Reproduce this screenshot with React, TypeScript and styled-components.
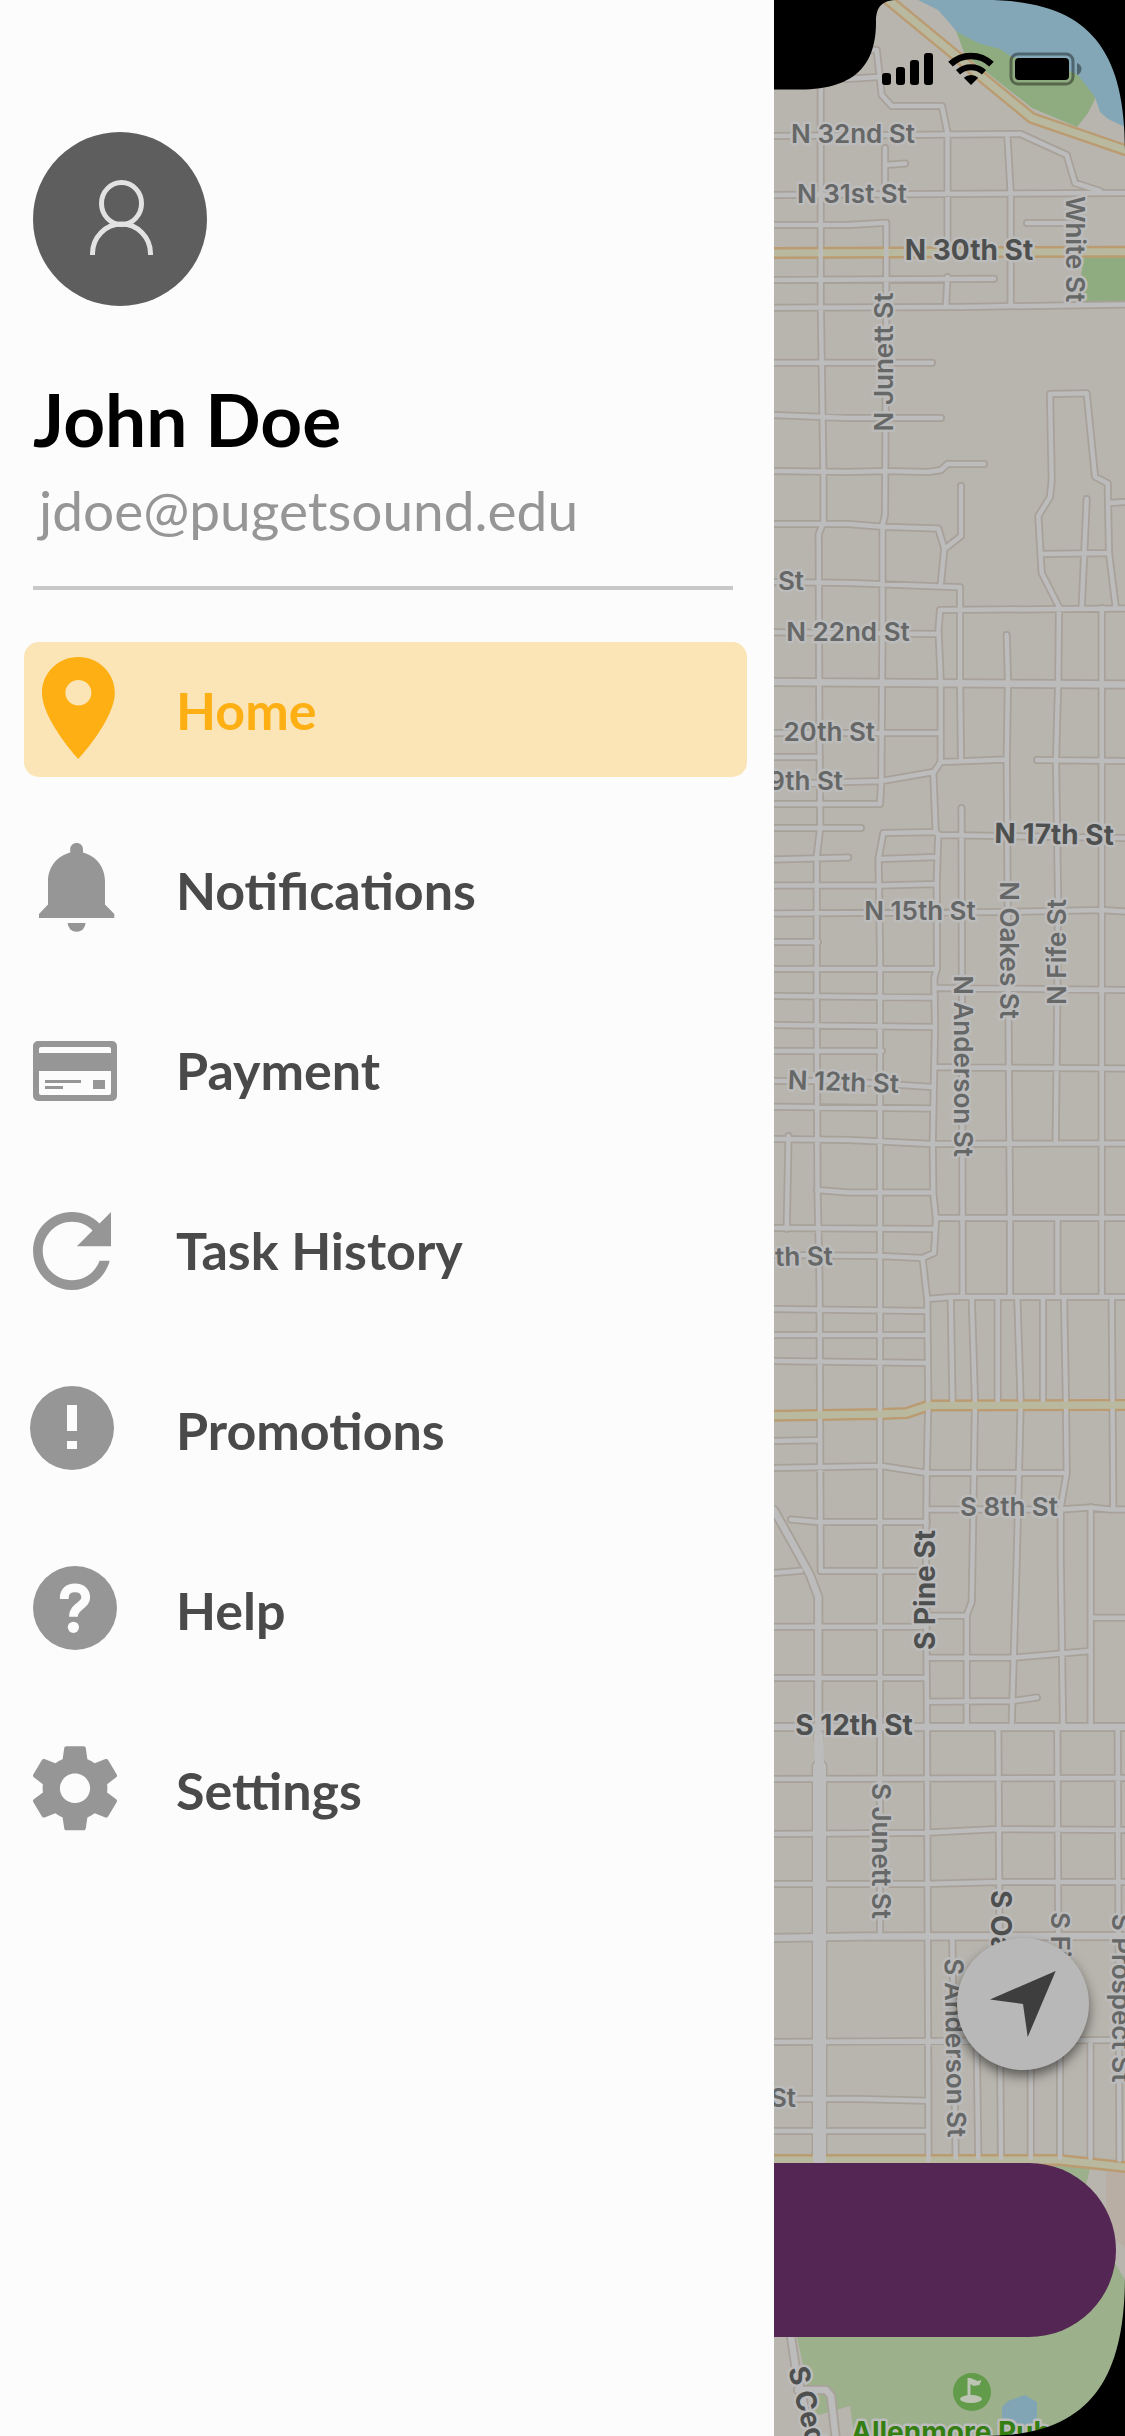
import React from 'react';
import styled, { createGlobalStyle } from 'styled-components';

const GlobalStyle = createGlobalStyle`
  *, *::before, *::after { box-sizing: border-box; }
  body { margin: 0; background: #fcfcfc; }
`;

const Screen = styled.div`
  display: flex;
  min-height: 100vh;
  overflow: hidden;
  font-family: Lato, 'Liberation Sans', sans-serif;
`;

const Drawer = styled.aside`
  flex: 0 0 68.8%;
  min-width: 0;
  background: #fcfcfc;
`;

const Profile = styled.header`
  margin: 0 41px 52px 33px;
  padding: 132px 0 44px;
  border-bottom: 4px solid #c8c8c8;
`;

const Avatar = styled.div`
  width: 174px;
  height: 174px;
  margin-bottom: 69px;
  border-radius: 50%;
  background: #5e5e5e;

  svg { display: block; }
`;

const Name = styled.h1`
  margin: 0 0 15px;
  font-size: 73px;
  line-height: 88px;
  font-weight: 700;
  color: #000;
`;

const Email = styled.p`
  margin: 0;
  padding-left: 6px;
  font-size: 55px;
  line-height: 64px;
  color: #969696;
`;

const Menu = styled.nav`
  display: flex;
  flex-direction: column;
  gap: 45px;
  padding: 0 27px 45px 24px;
`;

const MenuLink = styled.a<{ $active?: boolean }>`
  display: flex;
  align-items: center;
  gap: 56px;
  height: 135px;
  padding-left: 6px;
  border-radius: 15px;
  background: ${(p) => (p.$active ? '#fbe4b5' : 'transparent')};
  color: ${(p) => (p.$active ? '#fdaf14' : '#4a4a4a')};
  font-size: 52px;
  line-height: 62px;
  font-weight: 700;
  text-decoration: none;

  svg {
    flex: none;
    fill: ${(p) => (p.$active ? '#fdaf14' : '#969696')};
  }
`;

const MapPane = styled.main`
  position: relative;
  flex: 1;
  min-width: 0;
  overflow: hidden;
  background: #b8b5ae;
`;

const MapCanvas = styled.svg`
  position: absolute;
  inset: 0;
  width: 100%;
  height: 100%;
`;

const StreetLabel = styled.text<{ $bold?: boolean }>`
  font-family: Inter, 'Liberation Sans', sans-serif;
  font-size: ${(p) => (p.$bold ? 28 : 26)}px;
  font-weight: ${(p) => (p.$bold ? 700 : 600)};
  fill: ${(p) => (p.$bold ? '#4e4f4f' : '#666767')};
  stroke: #bcbcbc;
  stroke-width: 5px;
  stroke-linejoin: round;
  paint-order: stroke;
`;

const ParkLabel = styled(StreetLabel)`
  fill: #357f12;
`;

const StatusBar = styled.div`
  position: absolute;
  top: 52px;
  right: 43px;
  display: flex;
  gap: 15px;
`;

const LocateButton = styled.button`
  position: absolute;
  right: 36px;
  bottom: 366px;
  width: 132px;
  height: 132px;
  padding: 0;
  border: 0;
  border-radius: 50%;
  background: #b8b8b8;
  box-shadow: 0 6px 12px rgba(0, 0, 0, 0.5);

  svg { display: block; }
`;

const RequestButton = styled.button`
  position: absolute;
  left: 0;
  right: 9px;
  bottom: 99px;
  height: 174px;
  padding: 0;
  border: 0;
  border-radius: 0 87px 87px 0;
  background: #542653;
`;

const icons: Record<string, React.ReactNode> = {
  home: (
    <path
      fillRule="evenodd"
      transform="translate(-14 -7.2) scale(5.2 5.1)"
      d="M12 2C8.13 2 5 5.13 5 9c0 5.25 7 13 7 13s7-7.75 7-13c0-3.87-3.13-7-7-7zm0 9.5a2.5 2.5 0 0 1 0-5 2.5 2.5 0 0 1 0 5z"
    />
  ),
  bell: (
    <>
      <path d="M40.2 18.5v-3.2c0-3.6 2.8-6.3 6.4-6.3s6.4 2.7 6.4 6.3v3.2C66 22 75 33 75 47v23.500l9.300 9.500v4H9v-4l9-9.500V47c0-14 9.200-25 22.200-28.500z" />
      <path d="M37.700 89h17.800a8.900 8.700 0 0 1-17.800 0z" />
    </>
  ),
  card: (
    <path
      fillRule="evenodd"
      d="M8 27h74a5 5 0 0 1 5 5v50a5 5 0 0 1-5 5H8a5 5 0 0 1-5-5V32a5 5 0 0 1 5-5zM11 33a2 2 0 0 0-2 2v4h72v-4a2 2 0 0 0-2-2zM9 57v22a2 2 0 0 0 2 2h68a2 2 0 0 0 2-2V57zM15 66h36v3H15zM15 72h18v3H15zM63 66h12v9H63z"
    />
  ),
  refresh: (
    <path
      transform="translate(-16.500 -1.500) scale(4.875)"
      d="M17.65 6.35C16.2 4.9 14.21 4 12 4c-4.42 0-7.99 3.58-7.99 8s3.57 8 7.99 8c3.73 0 6.84-2.55 7.73-6h-2.08c-.82 2.33-3.04 4-5.65 4-3.31 0-6-2.69-6-6s2.69-6 6-6c1.66 0 3.14.69 4.220 1.78L13 11h7V4l-2.350 2.350z"
    />
  ),
  alert: (
    <path fillRule="evenodd" d="M42 12a42 42 0 0 1 0 84 42 42 0 0 1 0-84zM37 31v26h10V31zM37 67v8h10v-8z" />
  ),
  help: (
    <>
      <circle cx="45" cy="54" r="42" />
      <path
        d="M34.300 45v-1.500c0-6 4-9.700 10.700-9.700s10.700 3.700 10.700 9.700c0 8.500-12.300 8.500-12.300 19.200"
        fill="none"
        stroke="#fcfcfc"
        strokeWidth="8.800"
      />
      <circle cx="43.400" cy="73.300" r="5.600" fill="#fcfcfc" />
    </>
  ),
  gear: (
    <path
      transform="translate(-6.840 3.900) scale(4.320 4.200)"
      d="M19.43 12.98c.04-.32.07-.64.07-.98s-.03-.66-.07-.98l2.11-1.65c.19-.15.24-.42.12-.64l-2-3.46c-.12-.22-.39-.3-.61-.22l-2.49 1c-.52-.4-1.08-.73-1.69-.98l-.38-2.65C14.46 2.18 14.25 2 14 2h-4c-.25 0-.46.18-.49.42l-.38 2.65c-.61.25-1.17.59-1.69.98l-2.49-1c-.23-.09-.49 0-.61.22l-2 3.46c-.13.22-.07.49.12.64l2.11 1.65c-.04.32-.07.65-.07.98s.03.66.07.98l-2.11 1.65c-.19.15-.24.42-.12.64l2 3.46c.12.22.39.3.61.22l2.49-1c.52.4 1.08.73 1.69.98l.38 2.65c.03.24.24.42.49.42h4c.25 0 .46-.18.49-.42l.38-2.65c.61-.25 1.17-.59 1.69-.98l2.49 1c.23.09.49 0 .61-.22l2-3.46c.12-.22.07-.49-.12-.64l-2.11-1.65zM12 15.5c-1.930 0-3.500-1.570-3.500-3.500s1.570-3.500 3.500-3.500 3.500 1.570 3.500 3.500-1.570 3.500-3.500 3.500z"
    />
  ),
};

const menu = [
  { label: 'Home', icon: 'home', active: true },
  { label: 'Notifications', icon: 'bell' },
  { label: 'Payment', icon: 'card' },
  { label: 'Task History', icon: 'refresh' },
  { label: 'Promotions', icon: 'alert' },
  { label: 'Help', icon: 'help' },
  { label: 'Settings', icon: 'gear' },
];

const streets = [
  // long north-south streets
  'M820.7 85V300L823.5 480V522L818.7 534L819.3 720L820.3 827L816.7 857V1000L817.5 1190L819.5 1280L820.7 1571H917',
  'M774 225H848L886.3 222.7V300L885 515L882.5 525V630L881.3 780L880 804H774',
  'M1125 838L938 835L936 832L883.3 833L878.5 859L880 950V1933',
  'M871 50H876.7L881.7 95L891.7 106H942L947.5 133V240',
  'M947.5 277L946 306',
  'M846 79L878 77',
  'M1125 608.5L940 610L938.5 630L940.7 680V762L933.3 773L935.7 832L938.3 834L936.7 883L937 968L934.3 978L935 1027L932.7 1143L933.3 1193L936 1220L934 1253L922.5 1258L927.3 1300L928.3 1403L926.7 1473L926 1557L927 1730L928.5 2160',
  // north end
  'M774 136L1020.7 134L1066.7 155L1075 183L1100 191',
  'M885 148V187M885 165L905 163.500',
  'M774 195L1125 193',
  'M1007.3 134L1010.7 193V306',
  'M1027 223H1070',
  'M774 280L994 278.7',
  'M774 307.700L960 307L1125 304.500',
  'M774 362.700H932',
  'M774 415L848 418H941',
  'M774 471L848 472L885 471L928 472L941 470L947.5 464H984',
  'M774 524H848L882.7 526.7L938.3 528.5L944.300 548.500L940.7 585',
  'M961 486V536L944.500 549',
  'M774 582L850 583L960 587.3V680L961 758',
  'M1059 607L1041.700 573L1038.3 516L1050 497L1051.700 480L1050 394L1086.7 393.3L1095 476.7L1107.700 483.3L1109 553L1115.7 607',
  'M1108 503L1125 502M1086.7 499L1081.7 608M1041.7 554L1108 553',
  'M1059 607L1058.3 680L1056 760L1058 893L1057.3 1000L1055.7 1142',
  'M1101.700 608V1297',
  'M1006.7 635L1008 682L1006.7 760L1008 950L1010 1217V1297',
  'M961.5 808L962.700 1294',
  'M774 632.300L938 634',
  'M774 733H940M774 757H820M1037 760L1125 761M941 762L1006 759.500',
  'M774 784L881.700 781L933.3 772',
  'M774 828H861M774 859.500L848.3 857.500M774 885.5H880L936.7 884M880 859L936.7 857',
  'M774 913.500L1000 912L1101.700 910L1125 911.500M774 942H818',
  'M774 969H937M774 996L935 997.500M774 1025L935 1027M774 1051H882',
  'M937 988L1125 990M934 1067L1125 1068.500',
  'M774 1081H840L932 1087M774 1106.700L932 1108.500',
  'M774 1139L850 1140L932 1144L1055 1143.5H1125',
  'M817 1190L848 1192.500H933M774 1228L935 1229M788.500 1136L786.7 1229',
  'M774 1255L880 1256L922 1258M936 1218H1125M1057.5 1218V1294',
  'M774 1309L927 1311M774 1335H927M774 1361L927 1363',
  'M927 1299L951.7 1297H1125',
  'M950.7 1297L952.5 1402M997.7 1297V1402M1043 1297V1402',
  'M971.700 1297L975 1403L972.5 1560L971.700 1602L966.7 1615V1723',
  'M1017.3 1297L1020.7 1403L1016.7 1560L1011.7 1723',
  'M1064 1297L1066 1403L1066.700 1473L1060.700 1507V1560L1063 1723',
  'M1111.700 1297L1113.3 1508M1090.700 1507V1723',
  'M774 1441L820 1440M774 1468L881.700 1466L926.700 1473H1066.700',
  'M927 1509.500H1060L1090 1507.500L1110 1509.500H1125M791 1519.500L818 1522H927',
  'M774 1573L801 1570.700M774 1626.700H922M774 1678H927',
  'M930 1615.700H966M927 1657.700H1013L1090 1651M1091 1617.700H1125M927 1701.700L1013 1701L1037 1697.500',
  'M774 1779L1125 1778M774 1834L925 1832.700L998 1829L1125 1830M774 1884H925L1000 1882H1125',
  'M998.300 1730L999.500 1937M1057.3 1730L1058.300 1937M1117.700 1730L1119.500 2160',
  'M952.3 1938L955.7 2158M774 2042L1125 2040M976.7 2041L978.300 2158M1000 2041L1001 2158M1030.700 2041V2158M1060 2041V2158M1090.5 2041V2158',
  'M774 2099H860L927 2100.700M774 2131H927',
];

const avenues = [
  'M774 682L1125 684.500',
  'M774 1510L798 1553L810 1575L818.300 1597V1740',
  'M774 1727H1125',
  'M774 1938L860 1936.500L1125 1936',
  'M790 2330L796 2370L812 2440',
  'M798 2390H826L831 2396L836 2440',
];

const highways = [
  'M886 -2L1031.700 118L1125 150',
  'M774 253L1125 251.700',
  'M774 1415.700L881.700 1414L906.700 1413L929 1405.500L1125 1405',
  'M774 2160H1060L1125 2167',
];

type Anchor = 'start' | 'middle' | 'end';
const labels: { t: string; x: number; y: number; r?: number; b?: boolean; a?: Anchor }[] = [
  { t: 'N 32nd St', x: 853, y: 143 },
  { t: 'N 31st St', x: 852, y: 203 },
  { t: 'N 30th St', x: 969, y: 260, b: true },
  { t: 'White St', x: 1066, y: 249, r: 90 },
  { t: 'N Junett St', x: 893, y: 362, r: -90 },
  { t: 'St', x: 791, y: 590 },
  { t: 'N 22nd St', x: 848, y: 641 },
  { t: '20th St', x: 875, y: 741, a: 'end' },
  { t: '9th St', x: 843, y: 790, a: 'end' },
  { t: 'N 17th St', x: 1054, y: 844, b: true, r: 1 },
  { t: 'N 15th St', x: 920, y: 920 },
  { t: 'N Oakes St', x: 1000, y: 950, r: 90 },
  { t: 'N Fife St', x: 1066, y: 952, r: -90 },
  { t: 'N Anderson St', x: 954, y: 1066, r: 90 },
  { t: 'N 12th St', x: 843, y: 1091, r: 2 },
  { t: 'th St', x: 833, y: 1265, a: 'end', r: -1 },
  { t: 'S 8th St', x: 1009, y: 1516 },
  { t: 'S Pine St', x: 935, y: 1590, r: -90, b: true },
  { t: 'S 12th St', x: 854, y: 1735, b: true },
  { t: 'S Junett St', x: 872, y: 1851, r: 90 },
  { t: 'S Oakes St', x: 991, y: 1890, r: 90, b: true, a: 'start' },
  { t: 'S Fife St', x: 1051, y: 1912, r: 90, a: 'start' },
  { t: 'S Prospect St', x: 1112, y: 1998, r: 90 },
  { t: 'S Anderson St', x: 946, y: 2048, r: 89 },
  { t: 'St', x: 796, y: 2107, a: 'end' },
  { t: 'S Cedar St', x: 788, y: 2369, r: 76, b: true, a: 'start' },
];

function StreetMap() {
  return (
    <MapCanvas viewBox="774 0 351 2436" preserveAspectRatio="xMinYMin slice" role="img" aria-label="Street map">
      <path fill="#8fac80" d="M955 28L965 55L1032 108L1077 127L1088 113L1096 97L1078 70L1010 50Z" />
      <path fill="#83a7b7" d="M918 0L938 10L947 20L957 32L978 43L1000 49L1012 57L1050 62L1078 75L1095 97L1100 112L1108 119L1125 127V0Z" />
      <path fill="#8fac80" d="M1084 256H1125V303H1077Z" />
      <path fill="#9cb08b" d="M1020 2160L1090 2168L1085 2190L1115 2263L1125 2280V2436H854L852 2420L850 2406L815 2416L808 2390L797 2336V2300H1020Z" />
      <path fill="#b8aea4" d="M1106 2168H1125V2247L1106 2232Z" />
      <path fill="#81a5b4" d="M1002 2420V2407L1008 2401L1025 2395L1037 2402V2425H1002Z" />

      <g fill="none" strokeLinecap="round" strokeLinejoin="round">
        <path d={streets.join('')} stroke="#a8a199" strokeWidth="8" />
        <path d={avenues.join('')} stroke="#a8a199" strokeWidth="10" />
        <path d="M819.500 1767V2160" stroke="#a8a199" strokeWidth="16" />
        <path d={highways.join('')} stroke="#ba9b72" strokeWidth="12" />
        <path d={highways.join('')} stroke="#b9b99f" strokeWidth="7" />
        <path d={streets.join('')} stroke="#bcbcbc" strokeWidth="4.500" />
        <path d={avenues.join('')} stroke="#bcbcbc" strokeWidth="6.500" />
        <path d="M818.500 1735L819.500 1767" stroke="#bcbcbc" strokeWidth="9" />
        <path d="M819.500 1767V2160" stroke="#bcbcbc" strokeWidth="13" />
        <path d={highways[0]} stroke="#b9b99f" strokeWidth="7" />
        <path d={highways[2]} stroke="#b9b99f" strokeWidth="7" />
      </g>

      {labels.map(({ t, x, y, r = 0, b, a = 'middle' }, i) => (
        <StreetLabel key={i} $bold={b} textAnchor={a} transform={`translate(${x} ${y}) rotate(${r})`}>
          {t}
        </StreetLabel>
      ))}

      <circle cx="972" cy="2392" r="19" fill="#629b49" />
      <g fill="#bcc4b4">
        <ellipse cx="971" cy="2399" rx="11" ry="4" />
        <path d="M967.500 2378h3l7 3 4-1-2 5-6 1-3-2v14h-3z" />
      </g>
      <ParkLabel $bold x="851" y="2442">Allenmore Pub</ParkLabel>

      <path d="M774 0H895C880 1 876 9 876 22C876 62 858 89.500 800 89.500H774Z" />
      <path d="M985 0C1085 0 1125 45 1125 150V0Z" />
      <path d="M1125 2275C1125 2380 1090 2436 985 2436H1125Z" />
    </MapCanvas>
  );
}

function Status() {
  return (
    <StatusBar>
      <svg width="51" height="34" viewBox="0 0 51 34" role="img" aria-label="Signal">
        <rect x="0" y="21" width="9" height="12" rx="3" />
        <rect x="14" y="15" width="9" height="18" rx="3" />
        <rect x="28" y="8" width="9" height="25" rx="3" />
        <rect x="42" y="1" width="9" height="32" rx="3" />
      </svg>
      <svg width="46" height="34" viewBox="0 0 46 34" role="img" aria-label="Wi-Fi">
        <g fill="none" stroke="#000">
          <path d="M2.500 12.200a29.500 29.500 0 0 1 41 0" strokeWidth="6.500" />
          <path d="M10 20.300a19 19 0 0 1 26 0" strokeWidth="6" />
        </g>
        <path d="M23 33l-7.200-7.200a10.500 10.500 0 0 1 14.400 0z" />
      </svg>
      <svg width="73" height="34" viewBox="0 0 73 34" role="img" aria-label="Battery">
        <rect x="2" y="2" width="62" height="30" rx="7" fill="none" stroke="#000" strokeOpacity="0.400" strokeWidth="3" />
        <rect x="6" y="6" width="54" height="22" rx="4" />
        <path d="M68 11c6 2 6 10 0 12z" fillOpacity="0.400" />
      </svg>
    </StatusBar>
  );
}

export default function App() {
  return (
    <>
      <GlobalStyle />
      <Screen>
        <Drawer>
          <Profile>
            <Avatar>
              <svg width="174" height="174" viewBox="0 0 174 174" fill="none" stroke="#e2e2e2" strokeWidth="5" aria-hidden="true">
                <ellipse cx="88.500" cy="71.500" rx="20" ry="21" />
                <path d="M59.500 123v-1.500a29 29.500 0 0 1 58 0v1.500" />
              </svg>
            </Avatar>
            <Name>John Doe</Name>
            <Email>jdoe@pugetsound.edu</Email>
          </Profile>
          <Menu aria-label="Main menu">
            {menu.map((m) => (
              <MenuLink key={m.label} href="#" $active={m.active} aria-current={m.active ? 'page' : undefined}>
                <svg width="90" height="111" viewBox="0 0 90 111" aria-hidden="true">
                  {icons[m.icon]}
                </svg>
                {m.label}
              </MenuLink>
            ))}
          </Menu>
        </Drawer>
        <MapPane>
          <StreetMap />
          <Status />
          <LocateButton type="button" aria-label="Centre map on my location">
            <svg width="132" height="132" viewBox="0 0 132 132" fill="#3e3e3e" aria-hidden="true">
              <path d="M98.700 33L33 61.500L66 66L70.700 99Z" />
            </svg>
          </LocateButton>
          <RequestButton type="button" aria-label="Request" />
        </MapPane>
      </Screen>
    </>
  );
}
